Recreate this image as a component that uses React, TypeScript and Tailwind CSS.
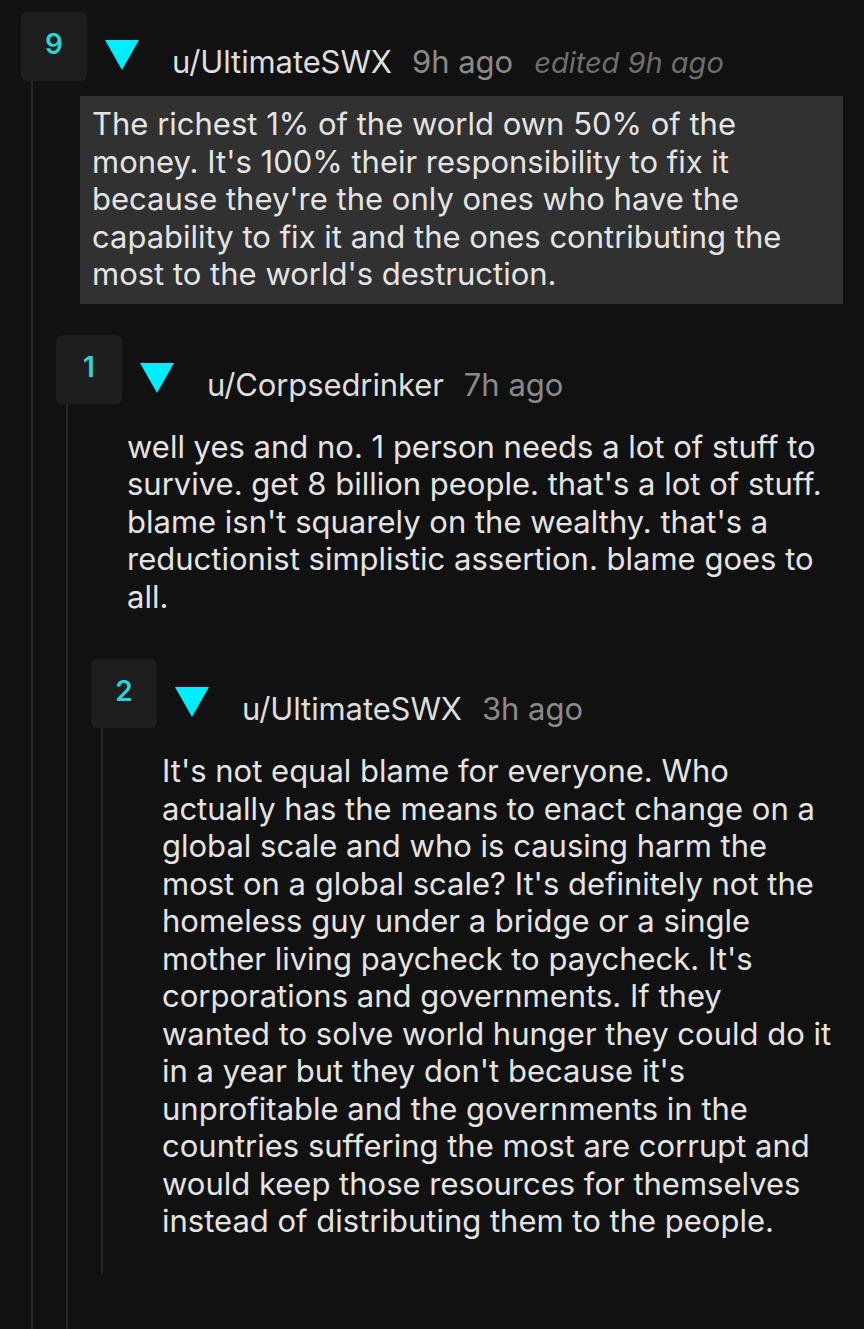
import React from 'react';

type CommentData = {
  score: number;
  user: string;
  time: string;
  edited?: string;
  body: string;
  replies?: CommentData[];
};

const thread: CommentData = {
  score: 9,
  user: 'u/UltimateSWX',
  time: '9h ago',
  edited: 'edited 9h ago',
  body: "The richest 1% of the world own 50% of the money. It's 100% their responsibility to fix it because they're the only ones who have the capability to fix it and the ones contributing the most to the world's destruction.",
  replies: [
    {
      score: 1,
      user: 'u/Corpsedrinker',
      time: '7h ago',
      body: "well yes and no. 1 person needs a lot of stuff to survive. get 8 billion people. that's a lot of stuff. blame isn't squarely on the wealthy. that's a reductionist simplistic assertion. blame goes to all.",
      replies: [
        {
          score: 2,
          user: 'u/UltimateSWX',
          time: '3h ago',
          body: "It's not equal blame for everyone. Who actually has the means to enact change on a global scale and who is causing harm the most on a global scale? It's definitely not the homeless guy under a bridge or a single mother living paycheck to paycheck. It's corporations and governments. If they wanted to solve world hunger they could do it in a year but they don't because it's unprofitable and the governments in the countries suffering the most are corrupt and would keep those resources for themselves instead of distributing them to the people.",
        },
      ],
    },
  ],
};

const Triangle = () => (
  <svg width="34" height="30" viewBox="0 0 34 30" className="shrink-0">
    <polygon points="0,0 34,0 17,30" fill="#00eefc" />
  </svg>
);

const Comment: React.FC<{ c: CommentData; depth: number }> = ({ c, depth }) => {
  const hasReplies = !!c.replies && c.replies.length > 0;
  return (
    <div className="flex flex-col">
      {/* header */}
      <div className="flex items-start">
        <div className="w-[66px] h-[69px] shrink-0 rounded-md bg-[#1e1e1e] flex items-center justify-center pb-[5px]">
          <span className="text-[#27d5da] text-[28px] leading-none font-semibold">{c.score}</span>
        </div>
        <div className="ml-[18px] mt-[28px]">
          <Triangle />
        </div>
        <div className="ml-[33px] mt-[32px] flex items-baseline whitespace-nowrap leading-[36px]">
          <span className="text-[31px] tracking-[-0.1px] text-[#dedede]">{c.user}</span>
          <span className="ml-[20px] text-[31px] text-[#8a8a8a]">{c.time}</span>
          {c.edited && <span className="ml-[21px] text-[29px] italic text-[#6e6e6e]">{c.edited}</span>}
        </div>
      </div>

      {/* thread line + content */}
      <div className="flex">
        <div className="w-[35px] shrink-0 flex">
          <div className="ml-[10px] w-[2px] bg-[#262626]" />
        </div>
        <div className={hasReplies ? 'flex-1 flex flex-col pb-[60px]' : 'flex-1 flex flex-col pb-[20px]'}>
          <div
            className={
              depth === 0
                ? 'ml-[24px] mt-[15px] bg-[#313131] pl-3 pr-[8px] pt-[9px] pb-[11px]'
                : 'ml-[24px] mt-[15px] pl-3 pr-[11px] pt-[9px] pb-[13px]'
            }
          >
            <p className="text-[31px] leading-[37.5px] text-[#e4e4e4]">{c.body}</p>
          </div>
          {c.replies?.map((r, i) => (
            <div key={i} className="mt-[31px]">
              <Comment c={r} depth={depth + 1} />
            </div>
          ))}
        </div>
      </div>
    </div>
  );
};

export default function App() {
  return (
    <div
      className="w-[864px] h-[1329px] overflow-hidden bg-[#111111] pl-[21px] pr-[21px] pt-3"
      style={{ fontFamily: 'Inter, "Noto Sans", sans-serif' }}
    >
      <Comment c={thread} depth={0} />
    </div>
  );
}
